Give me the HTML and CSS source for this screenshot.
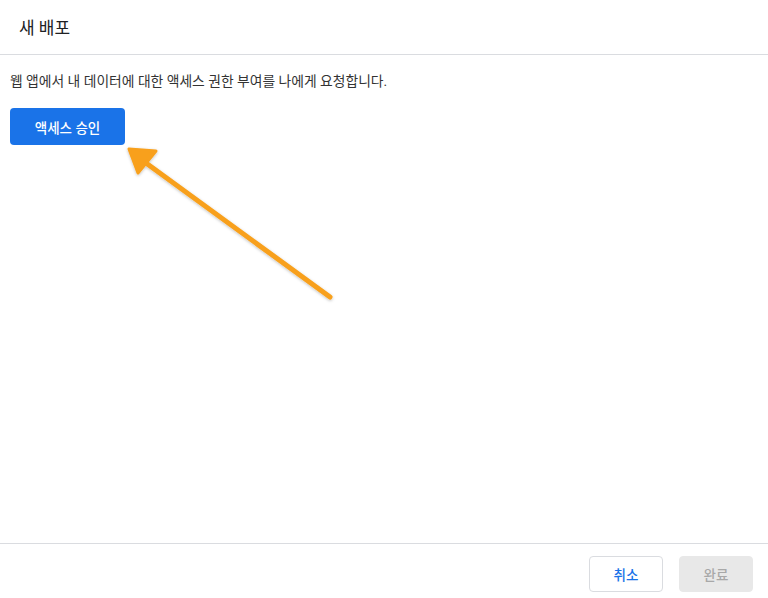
FILE: index.html
```html
<!DOCTYPE html>
<html lang="ko">
<head>
<meta charset="utf-8">
<link rel="stylesheet" href="styles.css">
</head>
<body>
<div class="dialog">
  <header class="dialog-header">
    <h1 class="title">새 배포</h1>
  </header>
  <main class="dialog-body">
    <p class="message">웹 앱에서 내 데이터에 대한 액세스 권한 부여를 나에게 요청합니다.</p>
    <button class="btn-primary">액세스 승인</button>
    <svg class="arrow" width="768" height="598" viewBox="0 0 768 598" aria-hidden="true">
      <defs>
        <filter id="sh" x="-20%" y="-20%" width="140%" height="140%">
          <feDropShadow dx="0" dy="1" stdDeviation="1.5" flood-color="#000" flood-opacity="0.25"/>
        </filter>
      </defs>
      <g filter="url(#sh)" fill="#f8a01c" stroke="#f8a01c" stroke-linejoin="round" stroke-linecap="round">
        <line x1="330" y1="297" x2="146" y2="163" stroke-width="5" fill="none"/>
        <polygon points="129,149 156,151 138,173" stroke-width="3"/>
      </g>
    </svg>
  </main>
  <footer class="dialog-footer">
    <button class="btn-secondary">취소</button>
    <button class="btn-disabled" disabled>완료</button>
  </footer>
</div>
</body>
</html>
```
FILE: styles.css
```css
* { box-sizing: border-box; }
html, body {
  margin: 0;
  padding: 0;
  background: #fff;
  font-family: Roboto, "Noto Sans CJK KR", "Noto Sans", sans-serif;
}
.dialog {
  width: 768px;
  height: 598px;
  display: flex;
  flex-direction: column;
}
.dialog-header {
  height: 55px;
  border-bottom: 1px solid #dadce0;
  display: flex;
  align-items: center;
  padding-left: 19px;
  padding-bottom: 1px;
}
.title {
  margin: 0;
  font-size: 17px;
  font-weight: 400;
  color: #202124;
}
.dialog-body {
  flex: 1;
  padding: 16px 10px 0;
  position: relative;
}
.message {
  margin: 0 0 17px;
  font-size: 13.8px;
  line-height: 20px;
  color: #333;
}
.btn-primary {
  display: block;
  width: 115px;
  height: 37px;
  border: none;
  border-radius: 4px;
  background: #1a73e8;
  color: #fff;
  font-family: inherit;
  font-size: 13.5px;
  font-weight: 500;
  padding: 0;
}
.arrow {
  position: absolute;
  left: 0;
  top: -55px;
  pointer-events: none;
}
.dialog-footer {
  height: 55px;
  border-top: 1px solid #dadce0;
  display: flex;
  justify-content: flex-end;
  align-items: flex-start;
  gap: 16px;
  padding: 12px 15px 0 0;
}
.btn-secondary, .btn-disabled {
  width: 74px;
  height: 36px;
  border-radius: 4px;
  font-family: inherit;
  font-size: 13.5px;
  font-weight: 500;
  padding: 0;
}
.btn-secondary {
  background: #fff;
  border: 1px solid #dadce0;
  color: #1a73e8;
}
.btn-disabled {
  background: #e8e8e8;
  border: 1px solid #e8e8e8;
  color: #a8a8a8;
}
```
